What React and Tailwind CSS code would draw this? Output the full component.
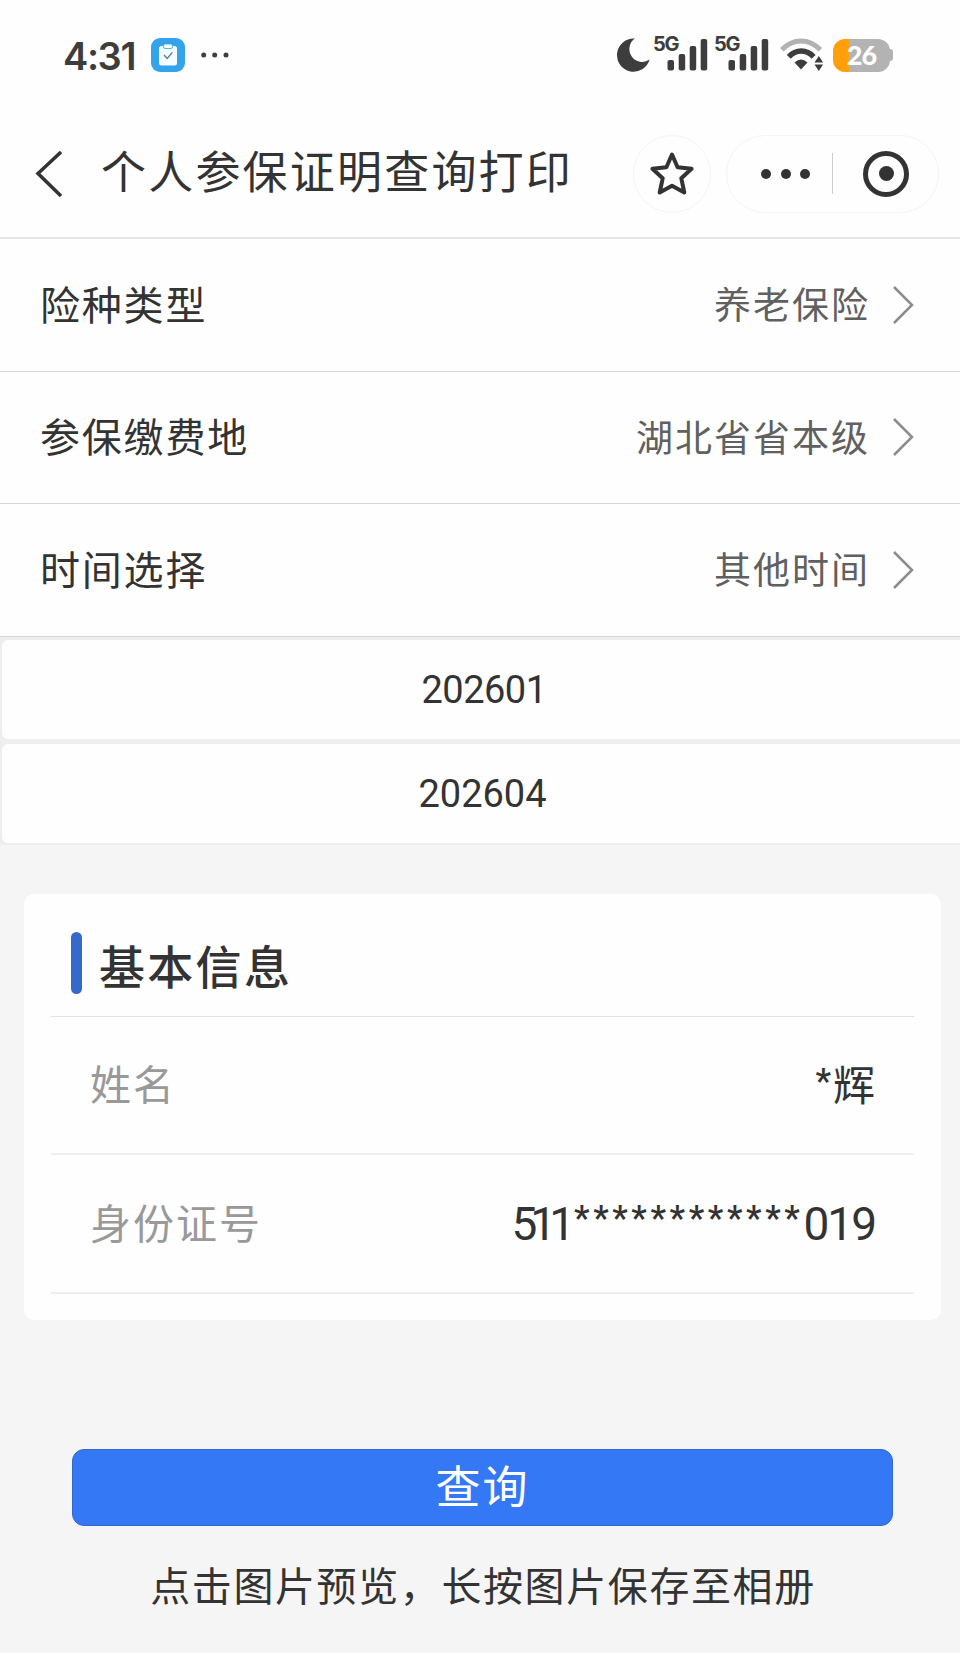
const FILTERS = [
  { label: "险种类型", value: "养老保险" },
  { label: "参保缴费地", value: "湖北省省本级" },
  { label: "时间选择", value: "其他时间" },
];

function Signal() {
  return (
    <div className="flex items-start text-[#3d3d3d]">
      <span className="w-[26px] -ml-px -mr-[12px] -mt-[1px] text-[20px] leading-[20px] font-bold font-[Inter,sans-serif] tracking-[-1.2px]">5G</span>
      <svg width="41" height="40" viewBox="13 0 41 40" fill="#3d3d3d">
        <rect x="13.5" y="25" width="6.5" height="10.5" rx="2" />
        <rect x="24.7" y="19" width="6.5" height="16.5" rx="2" />
        <rect x="35.7" y="11" width="6.5" height="24.5" rx="2" />
        <rect x="46.7" y="4" width="6.5" height="31.5" rx="2" />
      </svg>
    </div>
  );
}

function StatusBar() {
  return (
    <div className="h-[110px] flex items-center pl-[63px] pr-[67px] text-[#3d3d3d]">
      <span className="w-[88px] pt-px text-[38px] leading-none font-semibold font-[Inter,sans-serif] tracking-[-1.4px]">4:31</span>
      <svg width="34" height="34" viewBox="0 0 34 34">
        <rect width="34" height="34" rx="9" fill="#35a2ec" />
        <rect x="8" y="8" width="18" height="19.5" rx="2.5" fill="#f4fdff" />
        <rect x="12.5" y="6" width="9" height="4.5" rx="1.5" fill="#f4fdff" stroke="#35a2ec" strokeWidth="0.8" />
        <path d="M13 17l3.2 3.4 5.2-6" fill="none" stroke="#577f8c" strokeWidth="1.4" />
      </svg>
      <svg className="ml-4" width="30" height="8" viewBox="0 0 30 8" fill="#3d3d3d">
        <circle cx="2.7" cy="4" r="2.5" />
        <circle cx="13.7" cy="4" r="2.5" />
        <circle cx="25" cy="4" r="2.5" />
      </svg>
      <div className="ml-auto flex items-center">
        <svg width="33" height="34" viewBox="0 0 33 34">
          <path d="M17.8.6A16.6 16.6 0 1 0 32.6 21.6 12.4 12.4 0 0 1 17.8.6z" fill="#3d3d3d" />
        </svg>
        <div className="ml-1 flex gap-[7px]">
          <Signal />
          <Signal />
        </div>
        <svg className="ml-[11px]" width="44" height="34" viewBox="0 0 44 34" fill="none">
          <path d="M1.8 11.8C13-.1 29-.1 40.4 11.8" stroke="#b2b2b2" strokeWidth="5" />
          <path d="M8.8 18.8C16 11.2 26.5 11.2 33.6 18.8" stroke="#3d3d3d" strokeWidth="5.5" />
          <path d="M14.5 24.5Q21 18.5 27.5 24.5L21 31.5z" fill="#3d3d3d" />
          <path d="M34.5 24.5l4.3-6.5 4.3 6.5zM34.5 26.5h8.6l-4.3 6.5z" fill="#3d3d3d" />
        </svg>
        <div className="ml-[9px] flex items-center">
          <div className="w-[57px] h-[33px] rounded-[12px] bg-linear-to-r from-[#ff9f0a] from-[28%] to-[#b3b3b3] to-[28%] flex items-center justify-center">
            <span className="pb-0.5 text-[27px] leading-none font-black tracking-[-0.8px] text-white">26</span>
          </div>
          <div className="w-[3px] h-[12px] rounded-r bg-[#b3b3b3]" />
        </div>
      </div>
    </div>
  );
}

function TitleBar() {
  return (
    <div className="h-[129px] flex items-center pl-[35px] pr-[21px] border-b-2 border-[#e5e5e5]">
      <svg width="28" height="46" viewBox="0 0 28 46" fill="none" stroke="#333" strokeWidth="3.5">
        <path d="M26 1L3 22.5 26 45" />
      </svg>
      <h1 className="ml-[38px] -mt-[2px] text-[45px] leading-none tracking-[2.2px] whitespace-nowrap">个人参保证明查询打印</h1>
      <div className="ml-auto size-[78px] rounded-full border border-[#f4f4f4] flex items-center justify-center shrink-0">
        <svg width="46" height="46" viewBox="0 0 46 46" fill="none" stroke="#333" strokeWidth="4" strokeLinejoin="round">
          <path d="M23 3.5l5.6 12.8 14 1.5-10.3 9.5 3 14.2L23 34.8 10.7 41.5l3-14.2L3.4 17.8l14-1.5z" />
        </svg>
      </div>
      <div className="ml-[15px] w-[213px] h-[78px] shrink-0 rounded-full border border-[#f4f4f4] flex items-center">
        <div className="ml-[34px] flex gap-[9.5px]">
          <i className="size-[10px] rounded-full bg-[#333]" />
          <i className="size-[10px] rounded-full bg-[#333]" />
          <i className="size-[10px] rounded-full bg-[#333]" />
        </div>
        <div className="ml-[22px] w-px h-[41px] bg-[#ccc]" />
        <div className="ml-[30px] size-[46px] rounded-full border-[5px] border-[#333] flex items-center justify-center">
          <i className="size-[15px] rounded-full bg-[#333]" />
        </div>
      </div>
    </div>
  );
}

function FilterRow({ label, value }) {
  return (
    <div className="h-[132.5px] flex items-center pl-[40px] pr-[46px] border-b border-[#d5d5d5]">
      <span className="text-[40px] leading-none tracking-[1.8px]">{label}</span>
      <span className="ml-auto text-[37px] leading-none tracking-[2px] text-[#606060]">{value}</span>
      <svg className="ml-[22px]" width="22" height="38" viewBox="0 0 22 38" fill="none" stroke="#8c8c8c" strokeWidth="2.5">
        <path d="M2 1l18 18L2 37" />
      </svg>
    </div>
  );
}

function InfoRow({ label, children }) {
  return (
    <div className="h-[138.5px] flex items-center justify-between px-[39px] border-b-2 border-[#efefef]">
      <span className="text-[41px] leading-none tracking-[2px] text-[#999]">{label}</span>
      <span className="flex items-center leading-none">{children}</span>
    </div>
  );
}

export default function App() {
  return (
    <div className="w-[960px] h-[1653px] overflow-hidden bg-[#f5f5f5] text-[#333] font-[Lato,'Noto_Sans_CJK_SC',sans-serif]">
      <div className="bg-[#fefefe]">
        <StatusBar />
        <TitleBar />
        {FILTERS.map((f) => (
          <FilterRow key={f.label} {...f} />
        ))}
      </div>

      <div className="bg-[#eee] pt-[3px] pb-0.5 pl-0.5 flex flex-col gap-[5px] font-[Roboto,sans-serif] text-[38px]">
        <div className="h-[99px] bg-[#fefefe] rounded-l-[6px] flex items-center justify-center tracking-[-0.5px] pl-[6px] pt-[2px]">202601</div>
        <div className="h-[99px] bg-[#fefefe] rounded-l-[6px] flex items-center justify-center pl-[3px] pt-[2px]">202604</div>
      </div>

      <section className="mt-[49px] ml-[24px] w-[917px] h-[426px] rounded-[10px] bg-[#fefefe] px-[27px]">
        <div className="h-[123px] flex items-center pl-[20px] pt-[17px] border-b border-[#e2e2e2]">
          <div className="w-[11px] h-[62px] rounded-full bg-[#346acb]" />
          <h2 className="ml-[17px] mt-[7px] text-[46px] leading-none font-medium tracking-[2.3px]">基本信息</h2>
        </div>
        <InfoRow label="姓名">
          <span className="pb-[7px] text-[35px] font-medium tracking-[2px] font-[Roboto,sans-serif]">*</span>
          <span className="text-[42px]">辉</span>
        </InfoRow>
        <InfoRow label="身份证号">
          <div className="flex items-center pt-[2px] font-[Roboto,sans-serif]">
            <span className="text-[46px] tracking-[-7px]">511</span>
            <span className="pl-[6px] pb-[12px] text-[35px] font-medium tracking-[3.6px]">************</span>
            <span className="text-[46px] tracking-[-2px]">019</span>
          </div>
        </InfoRow>
      </section>

      <button className="mt-[129px] ml-[72px] w-[821px] h-[77px] flex items-center justify-center rounded-[12px] border border-[#3268c8] bg-[#3478f5] text-[45px] leading-none tracking-[2px] text-white">
        查询
      </button>
      <p className="mt-[40px] pl-[6px] text-center text-[40px] leading-none tracking-[1.6px]">点击图片预览，长按图片保存至相册</p>
    </div>
  );
}
